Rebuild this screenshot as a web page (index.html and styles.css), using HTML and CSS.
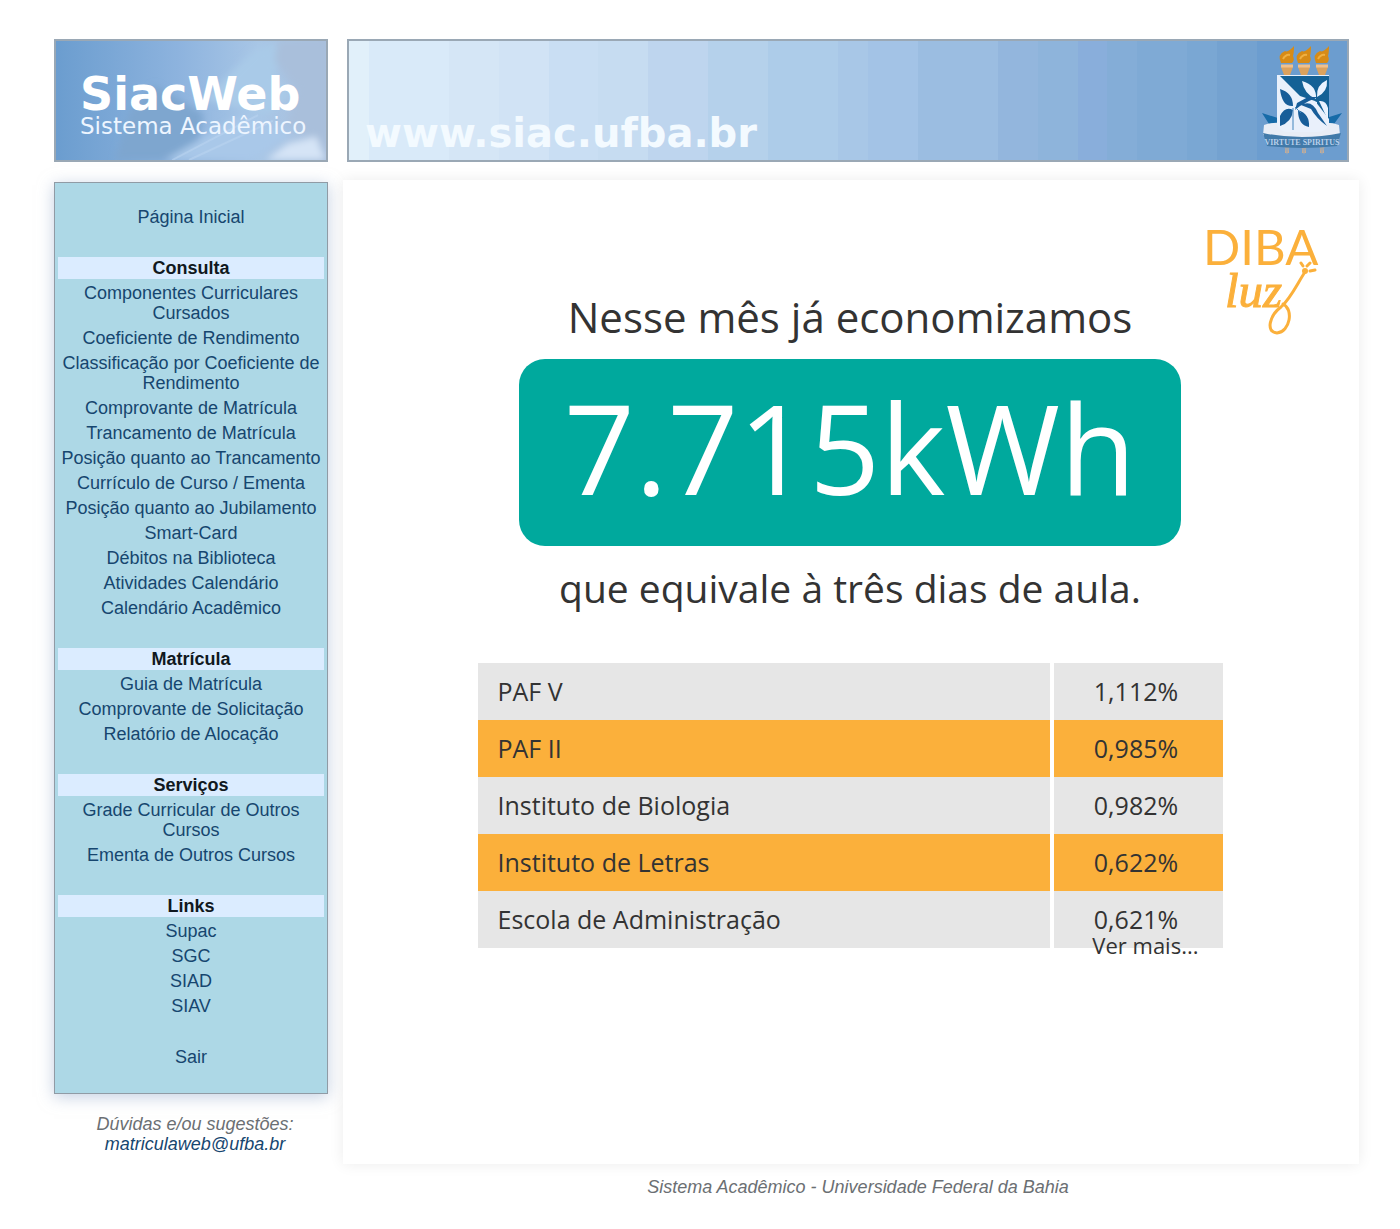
FILE: index.html
```html
<!DOCTYPE html>
<html lang="pt-BR">
<head>
<meta charset="utf-8">
<meta name="viewport" content="width=device-width, initial-scale=1">
<title>SiacWeb - Sistema Acadêmico</title>
<link rel="stylesheet" href="styles.css">
</head>
<body>
<header class="masthead">
  <div class="brand">
    <svg class="brand-art" viewBox="0 0 274 122" preserveAspectRatio="none" aria-hidden="true">
      <defs><filter id="soft"><feGaussianBlur stdDeviation="4"/></filter></defs>
      <g filter="url(#soft)">
        <path d="M60 122 L75 72 L100 45 L150 75 L140 122Z" fill="#7ea6cf"/>
        <path d="M110 122 L190 75 L240 95 L200 122Z" fill="#a9c8e9"/>
        <path d="M150 60 L200 10 L230 0 L222 35 L240 55 L215 75Z" fill="#a9cae8"/>
        <path d="M225 0 H274 V105 L235 85 L245 50 L222 20Z" fill="#a9bfdb"/>
        <path d="M213 122 L235 105 L264 98 L274 122Z" fill="#d5e4f6"/>
      </g>
      <path d="M118 122 L205 76 M135 122 L220 82" stroke="#bad4f0" stroke-width="2" opacity=".6"/>
    </svg>
    <p class="brand-text"><strong class="brand-name">SiacWeb</strong><span class="brand-sub">Sistema Acadêmico</span></p>
  </div>
  <div class="banner">
    <span class="banner-url">www.siac.ufba.br</span>
    <svg class="crest" viewBox="0 0 82 112" role="img" aria-label="Brasão da UFBA">
      <g id="torch">
        <path d="M27 28 V108" stroke="#c8ad94" stroke-width="4"/>
        <path d="M21 22 H33 L30 30 H24Z" fill="#dba25e"/>
        <path d="M21 21 H33" stroke="#f0c08c" stroke-width="3"/>
        <path d="M21 18 Q17 9 25 6 Q28 8 34 1 Q34 8 33 11 Q35 15 32 18Z" fill="#d78b16"/>
        <path d="M23 14 Q26 9 30 10" stroke="#efb041" stroke-width="2" fill="none"/>
        <path d="M24 101 H30 L27 110Z" fill="#a5a8ad"/>
      </g>
      <use href="#torch" x="17"/>
      <use href="#torch" x="35"/>
      <path d="M2 68 L18 73 V89 H4 L9 79Z" fill="#176ba8"/>
      <path d="M82 68 L66 73 V89 H80 L74 79Z" fill="#176ba8"/>
      <path d="M4 80 Q20 74 42 84 Q64 74 79 80 L80 90 Q61 96 42 95 Q20 96 3 90Z" fill="#e8edf6"/>
      <g transform="translate(6 -3)">
        <path d="M11 33 H63 V82 Q61 90 51 90 H23 Q12 90 11 82Z" fill="#e9f0fb"/>
        <path d="M14 34 H63 V77 L49 59 L34 54Z" fill="#146196"/>
        <path d="M36 39 Q51 43 50 57 Q38 52 36 39Z M61 38 Q62 50 51 55 Q50 43 61 38Z M53 59 Q60 58 62 66 L62 78Z M34 56 L51 60 V66 L32 63Z" fill="#eaf3ff"/>
        <path d="M14 47 Q27 51 27 64 Q16 65 14 47Z M14 74 Q19 64 27 68 Q26 80 14 84Z M32 68 Q44 72 43 85 Q32 83 32 68Z M35 63 Q46 57 52 71 L61 84 Q50 76 45 67Z M31 61 L42 55 H52 L43 59 L34 64 L29 68Z" fill="#175d99"/>
        <path d="M27 66 L27 88 M29 65 L35 71" stroke="#4385bd"/>
      </g>
      <path d="M3 88 Q22 92 42 92 Q62 92 81 88 L77 101 Q42 105 7 101Z" fill="#427aa9"/>
      <text x="42" y="100" class="crest-motto">VIRTUTE SPIRITUS</text>
    </svg>
  </div>
</header>

<div class="page">
  <aside class="side">
    <nav class="menu" aria-label="Menu principal">
      <ul class="menu-list"><li><a href="#">Página Inicial</a></li></ul>
      <h2>Consulta</h2>
      <ul class="menu-list">
        <li><a href="#">Componentes Curriculares Cursados</a></li>
        <li><a href="#">Coeficiente de Rendimento</a></li>
        <li><a href="#">Classificação por Coeficiente de Rendimento</a></li>
        <li><a href="#">Comprovante de Matrícula</a></li>
        <li><a href="#">Trancamento de Matrícula</a></li>
        <li><a href="#">Posição quanto ao Trancamento</a></li>
        <li><a href="#">Currículo de Curso / Ementa</a></li>
        <li><a href="#">Posição quanto ao Jubilamento</a></li>
        <li><a href="#">Smart-Card</a></li>
        <li><a href="#">Débitos na Biblioteca</a></li>
        <li><a href="#">Atividades Calendário</a></li>
        <li><a href="#">Calendário Acadêmico</a></li>
      </ul>
      <h2>Matrícula</h2>
      <ul class="menu-list">
        <li><a href="#">Guia de Matrícula</a></li>
        <li><a href="#">Comprovante de Solicitação</a></li>
        <li><a href="#">Relatório de Alocação</a></li>
      </ul>
      <h2>Serviços</h2>
      <ul class="menu-list">
        <li><a href="#">Grade Curricular de Outros Cursos</a></li>
        <li><a href="#">Ementa de Outros Cursos</a></li>
      </ul>
      <h2>Links</h2>
      <ul class="menu-list">
        <li><a href="#">Supac</a></li>
        <li><a href="#">SGC</a></li>
        <li><a href="#">SIAD</a></li>
        <li><a href="#">SIAV</a></li>
      </ul>
      <ul class="menu-list menu-exit"><li><a href="#">Sair</a></li></ul>
    </nav>
    <address class="contact">Dúvidas e/ou sugestões:<br><a href="mailto:matriculaweb@ufba.br">matriculaweb@ufba.br</a></address>
  </aside>

  <main class="content">
    <svg class="diba" viewBox="0 0 120 115" role="img" aria-label="Diba Luz">
      <text x="4" y="41" class="diba-top">DIBA</text>
      <text x="26" y="83" class="diba-script">luz</text>
      <path d="M84 80 C95 85 91 108 78 109 C66 108 71 91 82 83 C92 74 98 60 106 48 M104 42 L102 39 M108 42 L111 39 M111 47 L116 46" fill="none" stroke="#fbb03b" stroke-width="3" stroke-linecap="round"/>
      <circle cx="106" cy="47" r="3" fill="#fbb03b"/>
    </svg>
    <section class="saving">
      <p class="lead">Nesse mês já economizamos</p>
      <p class="figure">7.715kWh</p>
      <p class="lead lead-after">que equivale à três dias de aula.</p>
    </section>
    <div class="ranking">
      <table>
        <tbody>
          <tr><th scope="row">PAF V</th><td>1,112%</td></tr>
          <tr><th scope="row">PAF II</th><td>0,985%</td></tr>
          <tr><th scope="row">Instituto de Biologia</th><td>0,982%</td></tr>
          <tr><th scope="row">Instituto de Letras</th><td>0,622%</td></tr>
          <tr><th scope="row">Escola de Administração</th><td>0,621%</td></tr>
        </tbody>
      </table>
      <a class="more" href="#">Ver mais...</a>
    </div>
  </main>
</div>
<footer class="foot">Sistema Acadêmico - Universidade Federal da Bahia</footer>
</body>
</html>
```
FILE: styles.css
```css
* { box-sizing: border-box; }
body {
  margin: 0;
  padding: 39px 51px 20px 54px;
  background: #fff;
  font-family: "Liberation Sans", Arial, sans-serif;
  font-size: 18px;
  line-height: 20px;
  color: #16466f;
}
p, h2, ul { margin: 0; padding: 0; }
a { color: inherit; text-decoration: none; }

.masthead {
  display: grid;
  grid-template-columns: 274px 1fr;
  gap: 19px;
}
.brand, .banner {
  height: 123px;
  border: 2px solid #9aa8b5;
  color: #fff;
  font-family: "DejaVu Sans", Verdana, sans-serif;
}
.brand {
  display: grid;
  background: linear-gradient(90deg, #6b9dcf, #8db3de 45%, #a8c6e6 75%, #a9bfdc);
}
.brand-art, .brand-text { grid-area: 1 / 1; }
.brand-art { width: 100%; height: 100%; }
.brand-text { display: flex; flex-direction: column; padding: 32px 0 0 24px; white-space: nowrap; z-index: 1; }
.brand-name { font-size: 46px; line-height: 42px; }
.brand-sub { font-size: 23px; line-height: 22px; color: #edf5ff; }
.banner {
  display: flex;
  justify-content: space-between;
  align-items: flex-end;
  padding: 0 5px 3px 16px;
  background: linear-gradient(90deg,
    #e1f0fa 0 2%, #d9eaf9 2% 10%, #d5e6f6 10% 15%, #d1e3f5 15% 20%, #c9def3 20% 25%,
    #c6dcf1 25% 30%, #bed5ee 30% 36%, #b5d1eb 36% 42%, #adcce9 42% 49%, #a8c7e7 49% 52%,
    #a3c3e6 52% 57%, #9bbde1 57% 65%, #93b6dd 65% 69%, #8eb4db 69% 73%, #89aedb 73% 76%,
    #84add7 76% 79%, #7faad5 79% 84%, #7aa7d3 84% 87%, #74a2d0 87% 91%, #6c9dcf 91%);
}
.banner-url { padding-bottom: 1px; font-size: 40px; font-weight: bold; line-height: 46px; color: #f3faff; }
.crest { width: 82px; height: 112px; }
.crest-motto { font: bold 8px "Liberation Serif", serif; fill: #b7cfea; text-anchor: middle; }

.page {
  display: grid;
  grid-template-columns: 274px 1fr;
  gap: 15px;
  margin: 18px -10px 0 0;
}
.side { padding-top: 2px; text-align: center; }
.menu {
  padding: 22px 3px 23px;
  background: #add8e6;
  border: 1px solid #909ba5;
  box-shadow: 0 3px 15px #9db1ce99;
}
.menu-list { list-style: none; }
.menu-list li { padding: 2px 0 3px; }
.menu h2 {
  margin: 27px 0 2px;
  background: #dbecff;
  color: #101820;
  font-size: 18px;
  line-height: 22px;
}
.menu-exit { margin-top: 26px; }
.contact { margin-top: 20px; padding-left: 8px; color: #6b6f73; }
.contact a { color: #16466f; }

.content {
  position: relative;
  z-index: 1;
  min-height: 984px;
  padding: 109px 26px 24px 24px;
  background: #fff;
  box-shadow: 0 0 14px #00000014;
  font-family: "Open Sans", "Noto Sans", sans-serif;
  color: #333;
}
.diba { position: absolute; top: 44px; right: 40px; width: 120px; height: 115px; overflow: visible; }
.diba-top { font: 49px Lato, sans-serif; fill: #fbb03b; }
.diba-script { font: italic 49px "Liberation Serif", serif; fill: #fbb03b; stroke: #fbb03b; }
.saving { display: flex; flex-direction: column; align-items: center; text-align: center; }
.lead { font-size: 42px; line-height: 56px; }
.lead-after { font-size: 39px; }
.figure {
  width: 100%;
  max-width: 662px;
  margin: 14px 0;
  padding-bottom: 11px;
  border-radius: 26px;
  background: #00a99d;
  color: #fff;
  font-size: 124px;
  line-height: 176px;
}
.ranking { max-width: 745px; margin: 47px auto 0; font-size: 25px; line-height: 30px; }
table { width: 100%; border-collapse: collapse; table-layout: fixed; }
th, td { height: 57px; padding: 0 20px 2px; background: #e6e6e6; font-weight: normal; text-align: left; }
td { width: 171px; padding: 0 4px 2px 0; border-left: 4px solid #fff; background-clip: padding-box; text-align: center; }
tr:nth-child(even) > * { background-color: #fbb03b; }
.more { display: block; margin-top: -18px; padding-right: 24px; font-size: 22px; text-align: right; }
.foot { margin-top: 13px; padding-left: 313px; color: #6b6f73; font-size: 18px; font-style: italic; text-align: center; }
```
